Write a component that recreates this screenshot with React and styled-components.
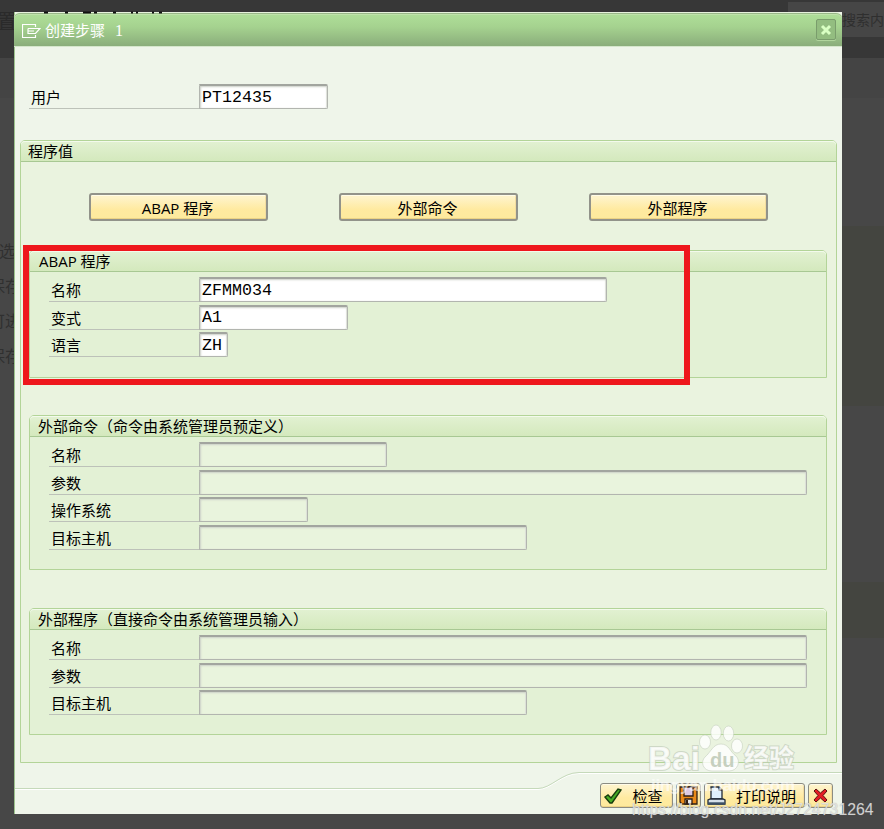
import styled, { createGlobalStyle } from "styled-components"

const GlobalStyle = createGlobalStyle`
    * { box-sizing: border-box; }
    body {
        margin: 0;
        background: #464646;
        font-family: "Open Sans", "Noto Sans CJK SC", sans-serif;
        font-size: 15px;
        color: #000;
    }
`
const Page = styled.div`
    position: relative;
    width: 884px;
    height: 829px;
    padding: 12px 0 0 14px;
    overflow: hidden;
    background: linear-gradient(#373737 58px, #444 58px, #444 98px, #474747 98px);
`
// dimmed page text peeking out from behind the dialog
const Ghost = styled.span`
    position: absolute;
    left: ${p => p.$x}px;
    top: ${p => p.$y}px;
    font-size: ${p => p.$size || 17}px;
    line-height: 24px;
    white-space: nowrap;
    color: ${p => p.$color || "#303030"};
`
const GhostSearch = styled.div`
    position: absolute;
    left: 788px;
    top: 2px;
    width: 96px;
    height: 35px;
    background: #464646;
`
const GhostBand = styled.div`
    position: absolute;
    left: 842px;
    right: 0;
    top: ${p => p.$y}px;
    height: ${p => p.$h}px;
    background: #444540;
`
const Specks = styled.svg`
    position: absolute;
    left: 40px;
    top: 11px;
`
const Dialog = styled.div`
    position: relative;
    display: flex;
    flex-direction: column;
    width: 828px;
    height: 802px;
    background: #eff5ea;
    border-left: 1px solid #9cc28c;
`
const TitleBar = styled.div`
    display: flex;
    align-items: center;
    height: 35px;
    margin-left: -1px;
    padding: 2px 6px 0 8px;
    border-top: 1px solid #e6f2dc;
    border-bottom: 1px solid #d5e6cc;
    border-radius: 6px 6px 0 0;
    box-shadow: inset 0 1px #98b888, inset 0 2px #bfe3aa;
    background: linear-gradient(#addd97 3px, #a5d28f 14px, #8aad7b 33px);
    color: #fff;
`
const Title = styled.span`
    flex: 1;
    margin: -2px 0 0 4px;
    white-space: pre;
`
const StepNo = styled.span`
    margin-left: 10px;
    font-family: "Liberation Serif", serif;
    font-size: 16px;
`
const CloseButton = styled.button`
    display: flex;
    align-items: center;
    justify-content: center;
    width: 20px;
    height: 21px;
    padding: 0;
    margin-top: -2px;
    background: #93bd80;
    border: 1px solid #7a9d6c;
    border-radius: 2px;
    box-shadow: 0 1px #b1d59d;
`
const Body = styled.div`
    flex: 1;
    padding: 37px 5px 0 5px;
`
const Group = styled.section`
    height: ${p => p.$h}px;
    margin-bottom: ${p => p.$gap || 0}px;
    border: 1px solid #b3d498;
    border-radius: 5px 5px 0 0;
    background: ${p => p.$outer ? "#eaf3df" : "#e3f1d5"};
`
const GroupTitle = styled.div`
    height: 21px;
    padding-left: ${p => p.$pad || 9}px;
    line-height: 20px;
    border-bottom: 1px solid #a8c893;
    border-radius: 4px 4px 0 0;
    box-shadow: inset 0 1px #f3faec;
    background: linear-gradient(#e2f1d2, #d4e9bd);
`
const Fields = styled.div`
    display: flex;
    flex-direction: column;
    gap: 2.5px;
    padding: 5px 0 0 19px;
`
const Row = styled.div`
    display: flex;
    height: 25px;
`
const Label = styled.label`
    width: ${p => p.$w || 150}px;
    padding-left: 2px;
    line-height: 27px;
    height: 25px;
    border-bottom: 1px solid #bdc2b9;
`
const Input = styled.input`
    width: ${p => p.$w}px;
    height: 25px;
    padding: 0 0 0 2px;
    border: 1px solid #b2b5af;
    border-top: 2px solid #a2a59f;
    border-radius: 0 2px 2px 0;
    outline: none;
    box-shadow: inset 1px 1px 2px #ccd0c8, inset -1px 0 1px #dde0da;
    background: ${p => p.disabled ? "#e9f4dd" : "#fff"};
    color: #000;
    font-family: "Liberation Mono", monospace;
    font-size: 16.67px;
`
const UserRow = styled.div`
    margin: 0 0 31px 9px;
`
const Choices = styled.div`
    display: flex;
    gap: 71px;
    padding: 31px 0 0 68px;
    margin-bottom: 29px;
`
const Button = styled.button`
    display: flex;
    align-items: center;
    justify-content: center;
    flex: none;
    width: 179px;
    height: 28px;
    padding: 0 2px 0 0;
    border: 2px solid #92938a;
    border-radius: 3px;
    box-shadow: inset 0 1px #fffbe8, inset 0 -1px #ecd385, inset -1px 0 #f4dda0;
    background: linear-gradient(#fef3c9 10%, #ffeaa0 60%, #fdea9d);
    color: #000;
    font: inherit;
    white-space: nowrap;
`
const ToolButton = styled(Button)`
    gap: 10px;
    width: ${p => p.$w}px;
    height: 25px;
    padding: 0 ${p => p.$pad || 0}px 0 0;
    border: 1px solid #8b8c82;
`
const Inner = styled.div`
    padding: 0 9px 0 8px;
`
const Footer = styled.footer`
    position: relative;
    height: 44px;
`
const FooterLine = styled.svg`
    position: absolute;
    left: 0;
    top: 0;
`
const Actions = styled.div`
    position: relative;
    display: flex;
    justify-content: flex-end;
    gap: 3px;
    padding: 13px 9px 0 0;
`
const Highlight = styled.div`
    position: absolute;
    left: 23px;
    top: 245px;
    width: 667px;
    height: 140px;
    border: 6px solid #ee171c;
`
const BaiduMark = styled.svg`
    position: absolute;
    left: 640px;
    top: 715px;
`
const BlogMark = styled.div`
    position: absolute;
    left: 632px;
    top: 800px;
    font: 15.8px/20px "Liberation Sans", sans-serif;
    white-space: nowrap;
    color: rgba(235, 235, 235, 0.82);
    text-shadow: 0 0 1px rgba(120, 120, 120, 0.6);
`

function ExportIcon() {
    return (
        <svg width="19" height="16" viewBox="0 0 19 16" fill="none" stroke="#fff" strokeWidth="1.2">
            <path d="M13.5 4V1.5h-13v13h13V12" />
            <path d="M6 5.5h12l-4.5 5H8M6 5.5v5h2M6 8h6" />
        </svg>
    )
}

function CheckIcon() {
    return (
        <svg width="18" height="16" viewBox="0 0 18 16">
            <path d="M1 9l3-2 3 3 7-9 3 1-9 13H6z" fill="#47ad26" stroke="#173d0d" strokeWidth="1.4" />
        </svg>
    )
}

function SaveIcon() {
    return (
        <svg width="19" height="19" viewBox="0 0 19 19" stroke="#302015" strokeWidth="1.3">
            <path d="M1 1h17v17H3l-2-2z" fill="#e98a19" />
            <path d="M5 1h9v9H5z" fill="#dccbe5" />
            <path d="M6 13h7v5H6z" fill="#ece8e4" />
            <path d="M7 14h2v4H7z" fill="#302015" stroke="none" />
        </svg>
    )
}

function PrintIcon() {
    return (
        <svg width="19" height="20" viewBox="0 0 19 20" stroke="#1f2936" strokeWidth="1.3">
            <path d="M4 1h8l3 3v9H4z" fill="#dff0fc" />
            <path d="M12 1v3h3" fill="#fff" />
            <path d="M3 13l-2 1v4h17v-4l-2-1z" fill="#d5e0e9" />
            <path d="M1 17.5h17" strokeWidth="2.4" stroke="#3c5064" />
        </svg>
    )
}

function CancelIcon() {
    return (
        <svg width="15" height="15" viewBox="0 0 15 15">
            <path d="M1 3l2-2 4.5 4L12 1l2 2-4 4.5 4 4.5-2 2-4.5-4L3 14l-2-2 4-4.5z" fill="#e41e24" stroke="#5a1010" />
        </svg>
    )
}

function Field({ label, width, value }) {
    return (
        <Row>
            <Label>{label}</Label>
            <Input $w={width} defaultValue={value} disabled={value === undefined} />
        </Row>
    )
}

export default function App() {
    return (
        <Page>
            <GlobalStyle />
            <GhostSearch />
            <Ghost $x={-3} $y={10} $size={20} $color="#2a2a2a">置</Ghost>
            <Ghost $x={842} $y={8} $size={14} $color="#2f2f2f">搜索内</Ghost>
            <Ghost $x={-1} $y={239} $size={16}>选</Ghost>
            <Ghost $x={-11} $y={274} $size={16}>保存</Ghost>
            <Ghost $x={-11} $y={309} $size={16}>可进</Ghost>
            <Ghost $x={-11} $y={344} $size={16}>保存</Ghost>
            <GhostBand $y={226} $h={180} />
            <GhostBand $y={582} $h={56} />
            <Dialog>
                <TitleBar>
                    <ExportIcon />
                    <Title>创建步骤<StepNo>1</StepNo></Title>
                    <CloseButton>
                        <svg width="12" height="12" viewBox="0 0 12 12">
                            <path d="M2 2l8 8M10 2l-8 8" stroke="#d9ffc3" strokeWidth="3" />
                        </svg>
                    </CloseButton>
                </TitleBar>
                <Body>
                    <UserRow>
                        <Row>
                            <Label $w={170}>用户</Label>
                            <Input $w={129} defaultValue="PT12435" />
                        </Row>
                    </UserRow>
                    <Group $outer $h={623}>
                        <GroupTitle $pad={7}>程序值</GroupTitle>
                        <Choices>
                            <Button>ABAP 程序</Button>
                            <Button>外部命令</Button>
                            <Button>外部程序</Button>
                        </Choices>
                        <Inner>
                            <Group $h={128} $gap={37}>
                                <GroupTitle>ABAP 程序</GroupTitle>
                                <Fields>
                                    <Field label="名称" width={408} value="ZFMM034" />
                                    <Field label="变式" width={149} value="A1" />
                                    <Field label="语言" width={29} value="ZH" />
                                </Fields>
                            </Group>
                            <Group $h={155} $gap={38}>
                                <GroupTitle $pad={8}>外部命令（命令由系统管理员预定义）</GroupTitle>
                                <Fields>
                                    <Field label="名称" width={188} />
                                    <Field label="参数" width={608} />
                                    <Field label="操作系统" width={109} />
                                    <Field label="目标主机" width={328} />
                                </Fields>
                            </Group>
                            <Group $h={127}>
                                <GroupTitle $pad={8}>外部程序（直接命令由系统管理员输入）</GroupTitle>
                                <Fields>
                                    <Field label="名称" width={608} />
                                    <Field label="参数" width={608} />
                                    <Field label="目标主机" width={328} />
                                </Fields>
                            </Group>
                        </Inner>
                    </Group>
                </Body>
                <Footer>
                    <FooterLine width="827" height="44" fill="none">
                        <path d="M0 19.5H523C536 19.5 547 3.5 564 3.5H827" stroke="#fff" />
                        <path d="M0 18.5H523C536 18.5 547 2.5 564 2.5H827" stroke="#c5d9ba" />
                    </FooterLine>
                    <Actions>
                        <ToolButton $w={73} $pad={6}><CheckIcon />检查</ToolButton>
                        <ToolButton $w={25}><SaveIcon /></ToolButton>
                        <ToolButton $w={101} $pad={6}><PrintIcon />打印说明</ToolButton>
                        <ToolButton $w={25}><CancelIcon /></ToolButton>
                    </Actions>
                </Footer>
            </Dialog>
            <Specks width="125" height="3" stroke="#111" strokeWidth="2">
                <path d="M4 1.5h4M25 1.5h3M43 1.5h8M54 1.5h3M73 1.5h3M91 1.5h2M96 1.5h2M112 1.5h2M119 1.5h3" />
            </Specks>
            <Highlight />
            <BaiduMark width="170" height="84" fill="#fff" fillOpacity="0.8" stroke="#c2cdbb" strokeOpacity="0.7" strokeWidth="0.8">
                <g fontFamily="Liberation Sans, Noto Sans CJK SC, sans-serif" fontWeight="bold">
                    <text x="8" y="55" fontSize="33" textLength="52" paintOrder="stroke" strokeWidth="2">Bai</text>
                    <text x="104" y="52" fontSize="25" textLength="50" paintOrder="stroke" strokeWidth="2">经验</text>
                    <text x="11" y="76" fontSize="17" textLength="144" stroke="none" fillOpacity="0.6">jingyan.baidu.com</text>
                </g>
                <ellipse cx="65" cy="27" rx="5.5" ry="7" />
                <ellipse cx="76" cy="17.5" rx="5.2" ry="7.5" />
                <ellipse cx="88.5" cy="18.5" rx="5.2" ry="7.5" />
                <ellipse cx="97" cy="31" rx="5.5" ry="7" />
                <path d="M81 29c8 0 9 8 15 12 5 5 2 15-7 15H72c-9 0-12-9-7-14 6-5 8-13 16-13z" />
                <text x="70" y="52" fontFamily="Liberation Sans, sans-serif" fontSize="20" fill="#b8c4b0" stroke="none" fontWeight="bold">du</text>
            </BaiduMark>
            <BlogMark>https://blog.csdn.net/J2724731264</BlogMark>
        </Page>
    )
}
